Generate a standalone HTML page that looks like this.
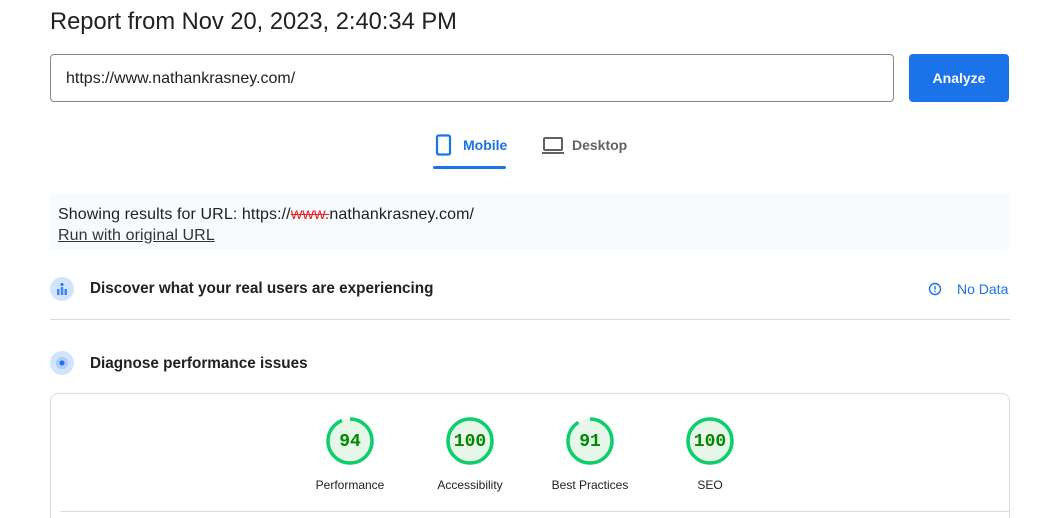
<!DOCTYPE html>
<html><head><meta charset="utf-8"><style>
*{margin:0;padding:0;box-sizing:border-box}
html,body{width:1044px;height:518px;overflow:hidden}
body{background:#fff;font-family:"Liberation Sans",Arial,sans-serif;position:relative;color:#202124}
.a{position:absolute}
.title{left:50px;top:9px;font-size:23.7px;color:#202124;white-space:nowrap}
.inp{left:50px;top:54px;width:844px;height:48px;border:1px solid #80868b;border-radius:4px;font-size:16px;padding:15px 0 0 15px;color:#202124}
.btn{left:909px;top:54px;width:100px;height:48px;background:#1a73e8;border-radius:4px;color:#fff;font-size:14px;font-weight:bold;text-align:center;line-height:48px}
.tab{font-size:14px;top:137px}
.info{left:50px;top:193px;width:960px;height:57px;background:#f8fbfd;font-size:16px;padding:11px 0 0 8px;line-height:21px;letter-spacing:0.1px}
.hd{font-size:15.3px;font-weight:bold;color:#202124}
.card{left:50px;top:393px;width:960px;height:140px;border:1px solid #dadce0;border-radius:8px}
.g{position:absolute;top:417px;width:48px;height:48px}
.gl{position:absolute;top:478px;font-size:12px;width:120px;text-align:center;color:#202124}
.gn{position:absolute;top:418px;width:48px;line-height:48px;text-align:center;font-family:"Liberation Mono",monospace;font-size:18px;font-weight:bold;color:#008800}
</style></head><body>
<div class="a title">Report from Nov 20, 2023, 2:40:34 PM</div>
<div class="a inp">https://www.nathankrasney.com/</div>
<div class="a btn">Analyze</div>
<svg class="a" style="left:435px;top:134px" width="18" height="22" viewBox="0 0 18 22"><rect x="2" y="1.5" width="13" height="19" rx="1.5" fill="none" stroke="#1a73e8" stroke-width="2.2"/></svg>
<div class="a tab" style="left:463px;color:#1a73e8;font-weight:bold">Mobile</div>
<div class="a" style="left:433px;top:166px;width:73px;height:3px;background:#1a73e8;border-radius:2px"></div>
<svg class="a" style="left:541px;top:136px" width="24" height="20" viewBox="0 0 24 20"><rect x="3" y="2" width="18" height="12" rx="1" fill="none" stroke="#5f6368" stroke-width="2"/><rect x="1" y="16" width="22" height="2" fill="#5f6368"/></svg>
<div class="a tab" style="left:572px;color:#5f6368;font-weight:bold">Desktop</div>
<div class="a info">Showing results for URL: https://<span style="color:#e8242c;text-decoration:line-through">www.</span>nathankrasney.com/<br><span style="text-decoration:underline;color:#333">Run with original URL</span></div>
<svg class="a" style="left:50px;top:277px" width="24" height="24" viewBox="0 0 24 24"><circle cx="12" cy="12" r="12" fill="#d2e3fc"/><rect x="7" y="12" width="2.5" height="6" fill="#4285f4"/><rect x="10.8" y="10" width="2.5" height="8" fill="#4285f4"/><rect x="14.5" y="12" width="2.5" height="6" fill="#4285f4"/><circle cx="12" cy="7.5" r="1.5" fill="#1a73e8"/></svg>
<div class="a hd" style="left:90px;top:280px">Discover what your real users are experiencing</div>
<svg class="a" style="left:928px;top:282px" width="14" height="14" viewBox="0 0 14 14"><circle cx="7" cy="7" r="5.5" fill="none" stroke="#1a73e8" stroke-width="1.4"/><rect x="6.3" y="3.8" width="1.4" height="4" fill="#1a73e8"/><rect x="6.3" y="8.8" width="1.4" height="1.4" fill="#1a73e8"/></svg>
<div class="a" style="left:957px;top:281px;font-size:14px;color:#1a73e8">No Data</div>
<div class="a" style="left:50px;top:319px;width:960px;height:1px;background:#dadce0"></div>
<svg class="a" style="left:50px;top:351px" width="24" height="24" viewBox="0 0 24 24"><circle cx="12" cy="12" r="12" fill="#d2e3fc"/><circle cx="12" cy="12" r="6" fill="#aecbfa"/><circle cx="12" cy="12" r="2.5" fill="#1a73e8"/></svg>
<div class="a hd" style="left:90px;top:355px">Diagnose performance issues</div>
<div class="a card"></div>
<div class="a" style="left:60px;top:511px;width:950px;height:1px;background:#dadce0"></div>

<svg class="g" style="left:326px" viewBox="0 0 48 48"><circle cx="24" cy="24" r="22" fill="#e6f7ea"/><circle cx="24" cy="24" r="22" fill="none" stroke="#0cce6b" stroke-width="3.5" stroke-dasharray="129.9 138.2" transform="rotate(-90 24 24)"/></svg>
<div class="gn" style="left:326px">94</div>
<div class="gl" style="left:290px">Performance</div>

<svg class="g" style="left:446px" viewBox="0 0 48 48"><circle cx="24" cy="24" r="22" fill="#e6f7ea" stroke="#0cce6b" stroke-width="3.5"/></svg>
<div class="gn" style="left:446px">100</div>
<div class="gl" style="left:410px">Accessibility</div>

<svg class="g" style="left:566px" viewBox="0 0 48 48"><circle cx="24" cy="24" r="22" fill="#e6f7ea"/><circle cx="24" cy="24" r="22" fill="none" stroke="#0cce6b" stroke-width="3.5" stroke-dasharray="125.8 138.2" transform="rotate(-90 24 24)"/></svg>
<div class="gn" style="left:566px">91</div>
<div class="gl" style="left:530px">Best Practices</div>

<svg class="g" style="left:686px" viewBox="0 0 48 48"><circle cx="24" cy="24" r="22" fill="#e6f7ea" stroke="#0cce6b" stroke-width="3.5"/></svg>
<div class="gn" style="left:686px">100</div>
<div class="gl" style="left:650px">SEO</div>
</body></html>
